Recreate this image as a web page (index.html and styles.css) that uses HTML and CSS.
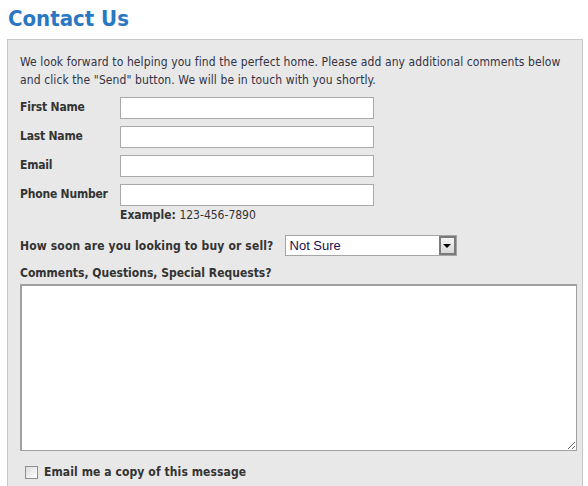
FILE: index.html
```html
<!DOCTYPE html>
<html lang="en">
<head>
<meta charset="utf-8">
<title>Contact Us</title>
<link rel="stylesheet" href="styles.css">
</head>
<body>
<h1 class="title">Contact Us</h1>
<form class="panel">
  <p class="intro">We look forward to helping you find the perfect home. Please add any additional comments below and click the "Send" button. We will be in touch with you shortly.</p>
  <div class="fields">
    <div class="row">
      <label class="label" for="fn">First Name</label>
      <input class="text" id="fn" type="text">
    </div>
    <div class="row">
      <label class="label" for="ln">Last Name</label>
      <input class="text" id="ln" type="text">
    </div>
    <div class="row">
      <label class="label" for="em">Email</label>
      <input class="text" id="em" type="text">
    </div>
    <div class="row">
      <label class="label" for="ph">Phone Number</label>
      <div class="stack">
        <input class="text" id="ph" type="text">
        <div class="hint"><b>Example:</b> 123-456-7890</div>
      </div>
    </div>
  </div>
  <div class="when">
    <label class="label-inline" for="soon">How soon are you looking to buy or sell?</label>
    <div class="select-wrap">
      <select class="select" id="soon">
        <option>Not Sure</option>
      </select>
      <span class="arrow"><span class="tri"></span></span>
    </div>
  </div>
  <label class="label-block" for="cm">Comments, Questions, Special Requests?</label>
  <textarea class="area" id="cm"></textarea>
  <div class="copy">
    <input class="check" id="cp" type="checkbox">
    <label class="label-inline" for="cp">Email me a copy of this message</label>
  </div>
</form>
</body>
</html>
```
FILE: styles.css
```css
html, body {
  margin: 0;
  padding: 0;
  background: #ffffff;
}
body {
  padding: 0 5px 0 7px;
  font-family: "DejaVu Sans Condensed", "DejaVu Sans", sans-serif;
  font-size: 12px;
  color: #333333;
}
.title {
  margin: 0;
  padding: 5px 0 0 1px;
  height: 39px;
  box-sizing: border-box;
  font-size: 22px;
  line-height: 27px;
  font-weight: bold;
  color: #2a78c2;
}
.panel {
  width: 576px;
  box-sizing: border-box;
  background: #e8e8e8;
  border: 1px solid #c8c8c8;
  padding: 13px 12px 20px 12px;
}
.intro {
  margin: 0 0 8px 0;
  line-height: 18px;
  color: #333344;
  letter-spacing: 0.1px;
}
.fields {
  display: flex;
  flex-direction: column;
  gap: 7px;
}
.row {
  display: flex;
  align-items: flex-start;
}
.label {
  width: 100px;
  font-weight: bold;
  line-height: 18px;
  padding-top: 1px;
  letter-spacing: -0.2px;
}
.stack {
  display: flex;
  flex-direction: column;
}
.text {
  width: 254px;
  height: 22px;
  box-sizing: border-box;
  margin: 0;
  border: 1px solid #a9a9a9;
  background: #ffffff;
  font: inherit;
  outline: none;
}
.hint {
  line-height: 18px;
  padding-top: 0;
}
.when {
  display: flex;
  align-items: center;
  margin-top: 11px;
}
.label-inline {
  font-weight: bold;
  line-height: 18px;
}
.when .label-inline {
  margin-right: 11px;
  letter-spacing: 0.15px;
}
.select-wrap {
  position: relative;
  width: 172px;
  height: 21px;
}
.select {
  appearance: none;
  -webkit-appearance: none;
  width: 100%;
  height: 100%;
  box-sizing: border-box;
  margin: 0;
  border: 1px solid #a5a5a5;
  border-radius: 0;
  background: #ffffff;
  font-family: "Liberation Sans", Arial, sans-serif;
  font-size: 13px;
  color: #1a1050;
  padding: 0 0 0 4px;
  outline: none;
}
.arrow {
  position: absolute;
  right: 1px;
  top: 1px;
  width: 17px;
  height: 19px;
  box-sizing: border-box;
  border: 2px solid #7a7a7a;
  background: linear-gradient(#f4f4f4, #d8d8d8);
  display: flex;
  align-items: center;
  justify-content: center;
  pointer-events: none;
}
.tri {
  width: 0;
  height: 0;
  border-left: 4px solid transparent;
  border-right: 4px solid transparent;
  border-top: 4px solid #000000;
}
.label-block {
  display: block;
  font-weight: bold;
  line-height: 18px;
  margin-top: 8px;
}
.area {
  display: block;
  width: 557px;
  height: 167px;
  box-sizing: border-box;
  margin: 2px 0 0 0;
  border: 1px solid #a0a0a0;
  border-top-width: 2px;
  border-left-width: 2px;
  background: #ffffff;
  font: inherit;
  outline: none;
}
.copy {
  display: flex;
  align-items: center;
  gap: 6px;
  margin-top: 12px;
  padding-left: 5px;
}
.copy .label-inline {
  font-size: 12px;
  letter-spacing: 0.1px;
}
.check {
  appearance: none;
  -webkit-appearance: none;
  width: 13px;
  height: 13px;
  margin: 0;
  box-sizing: border-box;
  border: 1px solid #8f8f8f;
  background: linear-gradient(135deg, #dcdcdc, #ffffff);
}
```
